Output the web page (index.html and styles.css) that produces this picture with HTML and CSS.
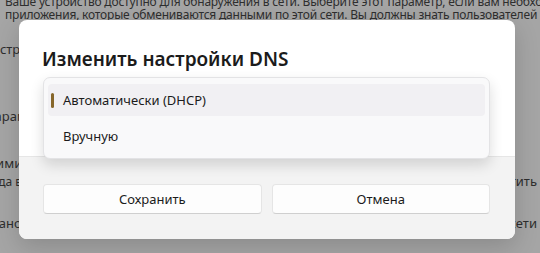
FILE: index.html
```html
<!DOCTYPE html>
<html lang="ru">
<head>
    <meta charset="UTF-8">
    <meta name="viewport" content="width=device-width, initial-scale=1.0">
    <title>Изменить настройки DNS</title>
    <link rel="stylesheet" href="styles.css">
</head>
<body>
    <!-- Settings page behind the dialog -->
    <div class="page">
        <p class="lead">Ваше устройство доступно для обнаружения в сети. Выберите этот параметр, если вам необходимо<br>приложения, которые обмениваются данными по этой сети. Вы должны знать пользователей</p>
        <div class="row row-first"><span>Настройки брандмауэра</span></div>
        <div class="row row-second"><span>Параметры IP</span></div>
        <div class="row row-metered">
            <span>Лимитное подключение</span>
        </div>
        <div class="row row-desc">
            <span class="hint">Когда вы подключены к этой сети</span>
            <span class="right">Отметить</span>
        </div>
        <div class="row row-last">
            <span>Установить</span>
            <span class="right">сети</span>
        </div>
    </div>

    <!-- The Dialog -->
    <div class="dialog">
        <div class="dialog-body">
            <h2>Изменить настройки DNS</h2>
        </div>
        <div class="dialog-footer">
            <button class="btn">Сохранить</button>
            <button class="btn">Отмена</button>
        </div>
        <div class="dropdown">
            <div class="option selected"><span class="accent"></span>Автоматически (DHCP)</div>
            <div class="option">Вручную</div>
        </div>
    </div>
</body>
</html>
```

FILE: styles.css
```css
body {
    margin: 0;
    width: 540px;
    height: 253px;
    overflow: hidden;
    position: relative;
    background: #a5a5a5;
    font-family: "Noto Sans", "Open Sans", sans-serif;
    color: #2e2e2e;
}
.page {
    padding-left: 5px;
}
.lead {
    margin: -5px 0 0;
    font-size: 12px;
    line-height: 13px;
    white-space: nowrap;
    letter-spacing: -0.2px;
}
.row {
    display: flex;
    justify-content: space-between;
    font-size: 13px;
    line-height: 20px;
    white-space: nowrap;
}
.row-first {
    margin-top: 18px;
    margin-left: -22px;
}
.row-second {
    margin-top: 47px;
    margin-left: -20px;
}
.row-metered {
    margin-top: 27px;
    margin-left: -18px;
}
.row-desc {
    margin-left: -26px;
    line-height: 17px;
}
.hint {
    font-size: 12px;
}
.row-last {
    margin-top: 23px;
    margin-left: -26px;
}
.right {
    margin-right: 3px;
}

/* Dialog Styles */
.dialog {
    position: absolute;
    left: 19px;
    top: 20px;
    width: 496px;
    height: 219px;
    background: #ffffff;
    border-radius: 8px;
    box-shadow: 0 8px 24px rgba(0, 0, 0, 0.16);
    overflow: hidden;
}
.dialog-body {
    height: 136px;
    padding: 0 23px;
    box-sizing: border-box;
}
.dialog-body h2 {
    margin: 0;
    padding-top: 25px;
    font-size: 19px;
    line-height: 28px;
    font-weight: 600;
    color: #1b1b1b;
}
.dialog-footer {
    height: 83px;
    box-sizing: border-box;
    background: #f3f3f3;
    border-top: 1px solid #e6e6e6;
    padding: 27px 25px 0 24px;
    display: grid;
    grid-template-columns: 1fr 1fr;
    column-gap: 10px;
    align-items: start;
}
.btn {
    height: 30px;
    background: #fdfdfd;
    border: 1px solid #e5e5e5;
    border-bottom-color: #cfcfcf;
    border-radius: 4px;
    font-family: inherit;
    font-size: 13px;
    color: #1b1b1b;
}

/* Open dropdown list */
.dropdown {
    position: absolute;
    left: 24px;
    top: 57px;
    width: 447px;
    box-sizing: border-box;
    padding: 6px 0;
    background: #f9f9fa;
    border: 1px solid #e3e3e5;
    border-radius: 7px;
    box-shadow: 0 6px 14px rgba(0, 0, 0, 0.14);
}
.option {
    position: relative;
    height: 32px;
    margin: 0 4px;
    padding-left: 15px;
    display: flex;
    align-items: center;
    font-size: 13px;
    color: #1b1b1b;
    border-radius: 4px;
}
.option + .option {
    margin-top: 4px;
}
.option.selected {
    background: #f1f0f3;
}
.accent {
    position: absolute;
    left: 3px;
    top: 9px;
    width: 3px;
    height: 15px;
    border-radius: 2px;
    background: #86662a;
}
```
